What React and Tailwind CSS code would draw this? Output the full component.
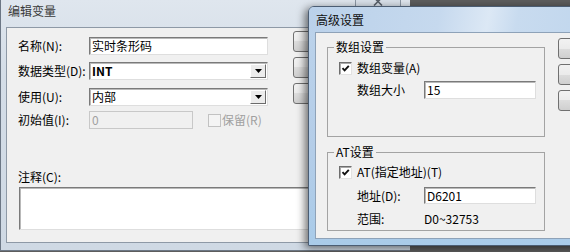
import React from "react";

const field =
  "border border-t-[#7a7a7a] border-l-[#7a7a7a] border-r-[#dedede] border-b-[#dedede] shadow-[inset_1px_1px_0_#b9b9b9]";

const winBtn =
  "h-[21px] w-[75px] rounded-[3px] border border-[#707070] bg-[linear-gradient(#f2f2f2,#ebebeb_50%,#dddddd_50%,#cfcfcf)]";

const CheckBox = ({ checked, disabled }) => (
  <span
    className={`flex h-[13px] w-[13px] shrink-0 items-center justify-center border ${
      disabled
        ? "border-[#c2c2c2] bg-[#f4f4f4]"
        : "border-t-[#6e6e6e] border-l-[#6e6e6e] border-r-[#e2e2e2] border-b-[#e2e2e2] bg-white shadow-[inset_1px_1px_0_#a9a9a9]"
    }`}
  >
    {checked && (
      <svg width="9" height="9" viewBox="0 0 9 9">
        <path d="M1.5 4.2 L3.6 6.4 L7.8 1.8" stroke="#111" strokeWidth="1.9" fill="none" />
      </svg>
    )}
  </span>
);

const DropArrow = () => (
  <span className="mr-[1px] flex h-[14px] w-[16px] items-center justify-center border border-t-white border-l-white border-r-[#6b6b6b] border-b-[#6b6b6b] bg-[#ececec]">
    <svg width="7" height="4" viewBox="0 0 7 4">
      <path d="M0 0 H7 L3.5 4 Z" fill="#000" />
    </svg>
  </span>
);

const Row = ({ label, children, className = "" }) => (
  <div className={`flex h-[18px] items-center ${className}`}>
    <span className="w-[71px] leading-[14px]">{label}</span>
    {children}
  </div>
);

function EditWindow() {
  return (
    <div className="absolute left-0 top-0 flex h-[251px] w-[410px] flex-col border-b border-l border-[#6c7785] bg-[linear-gradient(#dfe6ee,#d4dde7_30%,#cfd9e4)]">
      <div className="relative h-[27px] pl-[7px] pt-[3px] text-[12px] leading-[16px] text-[#3a3a3a]">
        编辑变量
        {/* close button, mostly hidden under the other dialog */}
        <div className="absolute left-[354px] top-[-8px] flex h-[20px] w-[46px] items-end justify-center rounded-b-[4px] border border-[#8c97a4] bg-[#d9e1ea] pb-[5px]">
          <svg width="10" height="9" viewBox="0 0 10 9">
            <path d="M1 0.5 L9 8.5 M9 0.5 L1 8.5" stroke="#5a626c" strokeWidth="1.6" />
          </svg>
        </div>
      </div>
      <div className="flex flex-1 flex-col">
        <div className="ml-[5px] flex-1 border border-[#8e99a6] bg-[#f0f0f0]">
          <div className="flex">
            <div className="w-[275px] pl-[11px] pt-[9px]">
              <Row label="名称(N):">
                <div className={`flex h-[18px] w-[179px] items-center bg-white pl-[2px] ${field}`}>
                  实时条形码
                </div>
              </Row>
              <Row label="数据类型(D):" className="mt-[7px]">
                <div className={`flex h-[18px] w-[179px] items-center justify-between bg-white pl-[2px] ${field}`}>
                  <span className="font-semibold">INT</span>
                  <DropArrow />
                </div>
              </Row>
              <Row label="使用(U):" className="mt-[8px]">
                <div className={`flex h-[18px] w-[179px] items-center justify-between bg-white pl-[2px] ${field}`}>
                  <span>内部</span>
                  <DropArrow />
                </div>
              </Row>
              <Row label="初始值(I):" className="mt-[5px]">
                <div className="flex h-[18px] w-[104px] items-center border border-[#c8c8c8] bg-[#f0f0f0] pl-[2px] text-[#a0a0a0]">
                  0
                </div>
                <div className="ml-[15px] flex items-center gap-[1px] text-[#a0a0a0]">
                  <CheckBox disabled />
                  <span>保留(R)</span>
                </div>
              </Row>
            </div>
            <div className="ml-[11px] flex flex-col gap-[5px] pt-[3px]">
              <div className={winBtn} />
              <div className={winBtn} />
              <div className={winBtn} />
            </div>
          </div>
          <div className="ml-[11px] mt-[41px] leading-[14px]">注释(C):</div>
          <div className={`ml-[12px] mt-[3px] h-[43px] w-[385px] bg-white ${field}`} />
        </div>
        <div className="h-[7px]" />
      </div>
    </div>
  );
}

function AdvancedWindow() {
  return (
    <div className="absolute left-[308px] top-[6px] flex h-[240px] w-[290px] flex-col rounded-t-[6px] border border-[#4b5d73] bg-[linear-gradient(#bcd3eb,#b4cde8_60%,#a9cbe9)] shadow-[-3px_2px_9px_rgba(0,0,0,0.55)]">
      <div className="h-[25px] rounded-t-[5px] bg-[linear-gradient(100deg,#bad1ea_0%,#c6d9ee_45%,#dce8f5_62%,#c8dbef_72%,#c0d6ed_100%)] pl-[7px] pt-[5px] text-[12px] leading-[16px] text-[#111]">
        高级设置
      </div>
      <div className="ml-[6px] flex flex-1 border border-[#8ea2b8] bg-[#f0f0f0]">
        <div className="flex w-[229px] flex-col pl-[11px] pt-[7px]">
          <fieldset className="h-[97px] w-[218px] border border-[#a3a3a3] p-0">
            <legend className="ml-[6px] px-[2px] leading-[14px]">数组设置</legend>
            <div className="ml-[11px] mt-[7px] flex h-[14px] items-center gap-[5px]">
              <CheckBox checked />
              <span>数组变量(A)</span>
            </div>
            <div className="ml-[29px] mt-[6px] flex h-[18px] items-center">
              <span className="w-[67px] leading-[14px]">数组大小</span>
              <div className={`flex h-[18px] w-[112px] items-center bg-white pl-[2px] ${field}`}>15</div>
            </div>
          </fieldset>
          <fieldset className="mt-[8px] h-[86px] w-[218px] border border-[#a3a3a3] p-0">
            <legend className="ml-[6px] px-[2px] leading-[14px]">AT设置</legend>
            <div className="ml-[11px] mt-[6px] flex h-[14px] items-center gap-[5px]">
              <CheckBox checked />
              <span>AT(指定地址)(T)</span>
            </div>
            <div className="ml-[29px] mt-[8px] flex h-[17px] items-center">
              <span className="w-[67px] leading-[14px]">地址(D):</span>
              <div className={`flex h-[17px] w-[112px] items-center bg-white pl-[2px] ${field}`}>D6201</div>
            </div>
            <div className="ml-[29px] mt-[8px] flex h-[14px] items-center leading-[14px]">
              <span className="w-[67px]">范围:</span>
              <span>D0~32753</span>
            </div>
          </fieldset>
        </div>
        <div className="ml-[13px] flex flex-col gap-[5px] pt-[5px]">
          <div className={winBtn} />
          <div className={winBtn} />
          <div className={winBtn} />
        </div>
      </div>
      <div className="h-[6px]" />
    </div>
  );
}

export default function App() {
  return (
    <div className="relative h-[252px] w-[570px] overflow-hidden bg-[#5d5d5d] font-['Noto_Sans_CJK_SC','Noto_Sans',sans-serif] text-[12px] text-[#000]">
      <EditWindow />
      <AdvancedWindow />
    </div>
  );
}
